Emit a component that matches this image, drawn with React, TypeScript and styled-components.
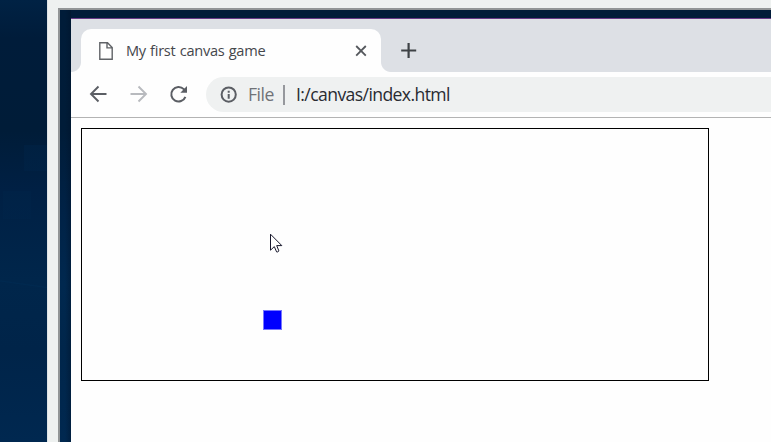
import React from "react";
import styled, { createGlobalStyle } from "styled-components";

const GlobalStyle = createGlobalStyle`
  * { box-sizing: border-box; }
  html, body { margin: 0; overflow: hidden; }
  body { font-family: "Open Sans", "Noto Sans", sans-serif; }
  svg { display: block; }
`;

const Desktop = styled.main`
  width: 771px;
  height: 442px;
  display: flex;
  overflow: hidden;
  background:
    linear-gradient(8deg, transparent 48%, #00305a55 50%, transparent 53%) 0 270px / 71px 32px no-repeat,
    linear-gradient(#00254a66, #00254a66) 3px 191px / 28px 28px no-repeat,
    linear-gradient(#00254a66, #00254a66) 24px 145px / 23px 26px no-repeat,
    linear-gradient(#002244 0, #001c3a 38px, #001c38 130px, #002044 190px, #00264b 280px, #002449 350px, #002850 442px);
`;

const OuterFrame = styled.div`
  flex: 1;
  margin-left: 47px;
  padding: 8px 0 0 10px;
  background: #eef1f0;
  border-left: 1px solid #dde3e6;
  display: flex;
`;

const Screen = styled.div`
  flex: 1;
  display: flex;
  padding: 8px 0 0 11px;
  border: solid #929596;
  border-width: 2px 0 0 2px;
  background:
    linear-gradient(90deg, transparent 5px, #00112766 11px) 0 0 / 11px 100% no-repeat,
    linear-gradient(#001c39 0, #001c38 120px, #002246 200px, #00284f 275px, #00264b 340px, #002850 432px);
`;

const BrowserWindow = styled.section`
  flex: 1;
  min-width: 0;
  display: flex;
  flex-direction: column;
  border-top: 1px solid #673a87;
  background: #fefefe;
`;

const TabStrip = styled.header`
  height: 53px;
  display: flex;
  align-items: flex-end;
  background: #dde0e5;
`;

const TabFlare = styled.span<{ $side: "left" | "right" }>`
  width: 10px;
  height: 10px;
  background: radial-gradient(circle at ${(p) => (p.$side === "left" ? "0 0" : "100% 0")}, #dde0e5 9.5px, #fefefe 10.5px);
`;

const Tab = styled.div`
  width: 300px;
  height: 43px;
  display: flex;
  align-items: center;
  padding: 0 14px 0 18px;
  border-radius: 10px 10px 0 0;
  background: #fefefe;
`;

const TabTitle = styled.span`
  flex: 1;
  margin-left: 13px;
  font-size: 14.6px;
  line-height: 20px;
  letter-spacing: -0.27px;
  word-spacing: 0.7px;
  margin-bottom: 1px;
  color: #45474c;
  white-space: nowrap;
`;

const NewTab = styled.span`
  margin: 0 0 13px 10px;
`;

const Toolbar = styled.nav`
  height: 46px;
  display: flex;
  align-items: center;
  padding-left: 18px;
  border-bottom: 1px solid #b3b3b3;
`;

const NavIcon = styled.span`
  width: 20px;
  margin-right: 20px;
  margin-top: -1px;
`;

const AddressBar = styled.div`
  flex: 1;
  height: 35px;
  display: flex;
  align-items: center;
  margin-left: -3px;
  padding-left: 14px;
  border-radius: 18px 0 0 18px;
  background: #eff1f1;
`;

const Scheme = styled.span`
  width: 35px;
  margin-left: 10px;
  margin-bottom: 2px;
  font-size: 17.6px;
  line-height: 24px;
  letter-spacing: -0.5px;
  color: #6f7277;
`;

const Separator = styled.span`
  width: 2px;
  height: 20px;
  background: #96989d;
`;

const Address = styled.span`
  margin-left: 11px;
  margin-bottom: 2px;
  font-size: 17.6px;
  line-height: 24px;
  letter-spacing: -0.6px;
  color: #292b31;
  white-space: nowrap;
`;

const Page = styled.div`
  flex: 1;
  padding: 10px;
`;

const GameCanvas = styled.div`
  position: relative;
  width: 628px;
  height: 253px;
  border: 1px solid #000;
`;

const Player = styled.div`
  position: absolute;
  left: 181px;
  top: 181px;
  width: 19px;
  height: 20px;
  background: #0000fe;
  border: 1px solid #7777ff;
`;

const Pointer = styled.svg`
  position: absolute;
  left: 188px;
  top: 104px;
`;

export default function App() {
  return (
    <>
      <GlobalStyle />
      <Desktop>
        <OuterFrame>
          <Screen>
            <BrowserWindow>
              <TabStrip>
                <TabFlare $side="left" />
                <Tab>
                  <svg width="14" height="18" viewBox="0 0 14 18" fill="none" stroke="#606367" strokeWidth="1.4">
                    <path d="M.8 .8h7.7l4.7 4.7v11.7H.8zM8 .8v5.1h5.2" />
                  </svg>
                  <TabTitle>My first canvas game</TabTitle>
                  <svg width="12" height="12" viewBox="0 0 12 12" stroke="#55585d" strokeWidth="1.8">
                    <path d="M1.2 1l9.6 9.6M10.8 1L1.2 10.6" />
                  </svg>
                </Tab>
                <TabFlare $side="right" />
                <NewTab>
                  <svg width="16" height="16" viewBox="0 0 16 16" stroke="#3e4246" strokeWidth="2.2">
                    <path d="M7.6 0v15M.2 7.5h15" />
                  </svg>
                </NewTab>
              </TabStrip>
              <Toolbar>
                <NavIcon>
                  <svg width="20" height="20" viewBox="0 0 20 20" fill="none" stroke="#5b5e64" strokeWidth="1.9">
                    <path d="M17.5 10H2.5M9.5 2.5L2 10l7.5 7.5" />
                  </svg>
                </NavIcon>
                <NavIcon>
                  <svg width="20" height="20" viewBox="0 0 20 20" fill="none" stroke="#b8babe" strokeWidth="1.9">
                    <path d="M1.5 10h15M9.5 2.5L17 10l-7.5 7.5" />
                  </svg>
                </NavIcon>
                <NavIcon>
                  <svg width="20" height="20" viewBox="0 0 20 20" fill="none" stroke="#5b5e64" strokeWidth="2">
                    <path d="M16.4 12.8A7.3 7.3 0 1 1 14.8 5.1l1.3 1.4" />
                    <path d="M18 2.1v6.7h-6.7z" fill="#5b5e64" stroke="none" />
                  </svg>
                </NavIcon>
                <AddressBar>
                  <svg width="18" height="18" viewBox="0 0 18 18" fill="none" stroke="#5b5e64" strokeWidth="2">
                    <circle cx="8.7" cy="8.6" r="7.1" />
                    <path d="M8.7 8v4.7M8.7 4.7v2" />
                  </svg>
                  <Scheme>File</Scheme>
                  <Separator />
                  <Address>I:/canvas/index.html</Address>
                </AddressBar>
              </Toolbar>
              <Page>
                <GameCanvas>
                  <Pointer width="13" height="21" viewBox="0 0 13 21" fill="#fff" stroke="#17172b">
                    <path d="M.5 1.2v16l3.8-3.6 2.3 5.3q1.4.5 2.3-1L6.7 12.6h5.1z" />
                  </Pointer>
                  <Player />
                </GameCanvas>
              </Page>
            </BrowserWindow>
          </Screen>
        </OuterFrame>
      </Desktop>
    </>
  );
}
